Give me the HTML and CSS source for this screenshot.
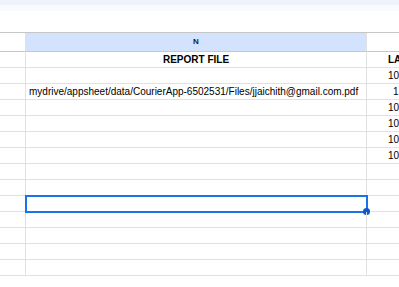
FILE: index.html
```html
<!DOCTYPE html>
<html lang="en">
<head>
    <meta charset="UTF-8">
    <title>Sheet</title>
    <link rel="stylesheet" href="styles.css">
</head>
<body>

    <div class="topbar"></div>
    <div class="toolbar"></div>

    <!-- Grid -->
    <div class="sheet">
        <div class="row head">
            <div class="cell num"></div>
            <div class="cell col selected-col">N</div>
            <div class="cell last"></div>
        </div>
        <div class="row">
            <div class="cell num"></div>
            <div class="cell col bold center">REPORT FILE</div>
            <div class="cell last bold">LA</div>
        </div>
        <div class="row">
            <div class="cell num"></div>
            <div class="cell col"></div>
            <div class="cell last">10</div>
        </div>
        <div class="row">
            <div class="cell num"></div>
            <div class="cell col">mydrive/appsheet/data/CourierApp-6502531/Files/jjaichith@gmail.com.pdf</div>
            <div class="cell last one">1</div>
        </div>
        <div class="row">
            <div class="cell num"></div>
            <div class="cell col"></div>
            <div class="cell last">10</div>
        </div>
        <div class="row">
            <div class="cell num"></div>
            <div class="cell col"></div>
            <div class="cell last">10</div>
        </div>
        <div class="row">
            <div class="cell num"></div>
            <div class="cell col"></div>
            <div class="cell last">10</div>
        </div>
        <div class="row">
            <div class="cell num"></div>
            <div class="cell col"></div>
            <div class="cell last">10</div>
        </div>
        <div class="row">
            <div class="cell num"></div>
            <div class="cell col"></div>
            <div class="cell last"></div>
        </div>
        <div class="row">
            <div class="cell num"></div>
            <div class="cell col"></div>
            <div class="cell last"></div>
        </div>
        <div class="row">
            <div class="cell num"></div>
            <div class="cell col active"><span class="handle"></span></div>
            <div class="cell last"></div>
        </div>
        <div class="row">
            <div class="cell num"></div>
            <div class="cell col"></div>
            <div class="cell last"></div>
        </div>
        <div class="row">
            <div class="cell num"></div>
            <div class="cell col"></div>
            <div class="cell last"></div>
        </div>
        <div class="row">
            <div class="cell num"></div>
            <div class="cell col"></div>
            <div class="cell last"></div>
        </div>
        <div class="row">
            <div class="cell num"></div>
            <div class="cell col"></div>
            <div class="cell last"></div>
        </div>
    </div>

</body>
</html>
```

FILE: styles.css
```css
body {
    margin: 0;
    font-family: "Liberation Sans", Arial, sans-serif;
    background-color: #fff;
    overflow: hidden;
}
.topbar {
    height: 5px;
    background-color: #eef2f9;
}
.toolbar {
    height: 6px;
    background-color: #f8fafd;
}
.sheet {
    margin-top: 21px;
    border-top: 1px solid #c4c7c5;
}
.row {
    display: flex;
    height: 16px;
}
.row.head {
    height: 19px;
}
.cell {
    box-sizing: border-box;
    border-right: 1px solid #e1e1e1;
    border-bottom: 1px solid #e1e1e1;
    font-size: 10px;
    line-height: 15px;
    color: #000;
    white-space: nowrap;
    overflow: hidden;
}
.head .cell {
    border-bottom-color: #c4c7c5;
    line-height: 18px;
    font-size: 8px;
    font-weight: bold;
    text-align: center;
}
.num {
    width: 26px;
    flex: none;
}
.col {
    width: 341px;
    flex: none;
    padding: 0 3px;
    position: relative;
    overflow: visible;
}
.last {
    flex: 1;
    padding-left: 21px;
    border-right: none;
}
.last.one {
    padding-left: 26px;
}
.selected-col {
    background-color: #d3e3fd;
    color: #041e49;
}
.bold {
    font-weight: bold;
}
.center {
    text-align: center;
}
.active {
    outline: 2px solid #1a73e8;
    outline-offset: -1px;
}
.handle {
    position: absolute;
    right: -4px;
    bottom: -4px;
    width: 7px;
    height: 7px;
    border-radius: 50%;
    background-color: #0b57d0;
}
```
